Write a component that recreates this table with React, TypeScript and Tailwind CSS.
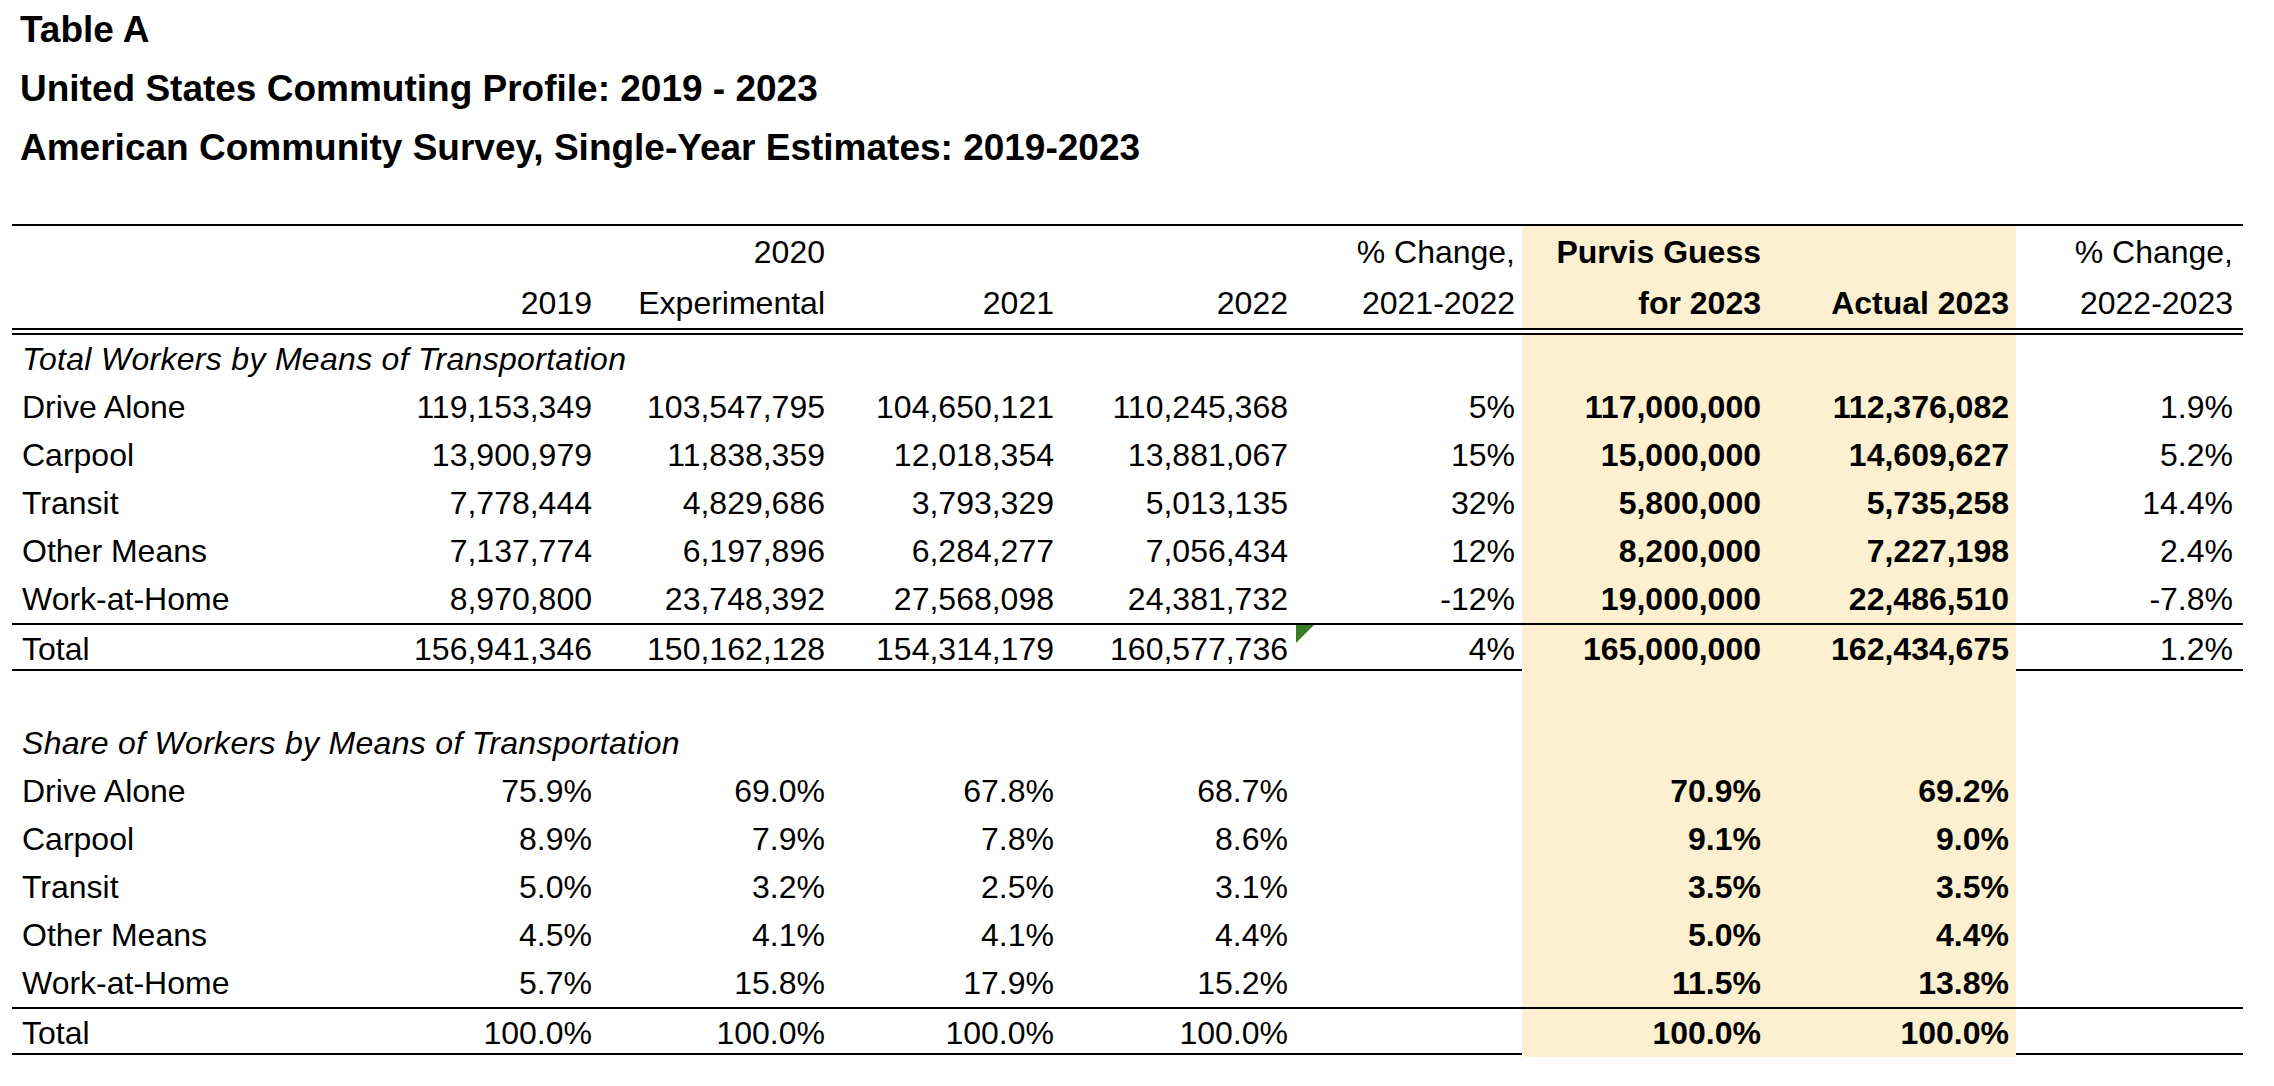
const COLS =
  "grid grid-cols-[347px_240px_233px_229px_234px_227px_246px_248px_227px]";

const totals: [string, string[]][] = [
  ["Drive Alone", ["119,153,349", "103,547,795", "104,650,121", "110,245,368", "5%", "117,000,000", "112,376,082", "1.9%"]],
  ["Carpool", ["13,900,979", "11,838,359", "12,018,354", "13,881,067", "15%", "15,000,000", "14,609,627", "5.2%"]],
  ["Transit", ["7,778,444", "4,829,686", "3,793,329", "5,013,135", "32%", "5,800,000", "5,735,258", "14.4%"]],
  ["Other Means", ["7,137,774", "6,197,896", "6,284,277", "7,056,434", "12%", "8,200,000", "7,227,198", "2.4%"]],
  ["Work-at-Home", ["8,970,800", "23,748,392", "27,568,098", "24,381,732", "-12%", "19,000,000", "22,486,510", "-7.8%"]],
];

const shares: [string, string[]][] = [
  ["Drive Alone", ["75.9%", "69.0%", "67.8%", "68.7%", "", "70.9%", "69.2%", ""]],
  ["Carpool", ["8.9%", "7.9%", "7.8%", "8.6%", "", "9.1%", "9.0%", ""]],
  ["Transit", ["5.0%", "3.2%", "2.5%", "3.1%", "", "3.5%", "3.5%", ""]],
  ["Other Means", ["4.5%", "4.1%", "4.1%", "4.4%", "", "5.0%", "4.4%", ""]],
  ["Work-at-Home", ["5.7%", "15.8%", "17.9%", "15.2%", "", "11.5%", "13.8%", ""]],
];

function Row({
  label,
  values,
  italic,
  className = "",
  flag,
}: {
  label: string;
  values: string[];
  italic?: boolean;
  className?: string;
  flag?: boolean;
}) {
  return (
    <div className={`${COLS} h-[48px] ${className}`}>
      <div
        className={`flex items-center whitespace-nowrap pl-[10px] ${
          italic ? "italic tracking-[0.3px]" : ""
        }`}
      >
        {label}
      </div>
      {values.map((v, i) => {
        const hl = i === 5 || i === 6;
        return (
          <div
            key={i}
            className={`relative flex items-center justify-end whitespace-nowrap ${
              i === 7 ? "pr-[10px]" : "pr-[7px]"
            } ${hl ? "bg-[#fcf0d0] font-bold" : ""}`}
          >
            {flag && i === 4 && (
              <svg className="absolute left-px top-0" width="18" height="18" viewBox="0 0 18 18">
                <polygon points="0,0 18,0 0,18" fill="#3b7d23" />
              </svg>
            )}
            {v}
          </div>
        );
      })}
    </div>
  );
}

export default function App() {
  const blank = ["", "", "", "", "", "", "", ""];

  return (
    <div className="min-h-screen bg-white pl-[12px] font-['Liberation_Sans',Arial,sans-serif] text-[32px] text-black">
      {/* titles */}
      <div className="text-[37px] font-bold">
        <div className="flex h-[59px] items-center pl-[8px]">Table A</div>
        <div className="flex h-[60px] items-center pl-[8px]">
          United States Commuting Profile: 2019 - 2023
        </div>
        <div className="flex h-[58px] items-center pl-[8px]">
          American Community Survey, Single-Year Estimates: 2019-2023
        </div>
      </div>

      <div className="mt-[47px] w-[2231px] border-t-2 border-black">
        <div className={`${COLS} h-[51px]`}>
          <div />
          <div />
          <div className="flex items-center justify-end pr-[7px]">2020</div>
          <div />
          <div />
          <div className="flex items-center justify-end pr-[7px]">% Change,</div>
          <div className="flex items-center justify-end bg-[#fcf0d0] pr-[7px] font-bold">
            Purvis Guess
          </div>
          <div className="bg-[#fcf0d0]" />
          <div className="flex items-center justify-end pr-[10px]">% Change,</div>
        </div>
        <div className={`${COLS} h-[58px] border-b-[7px] border-double border-black`}>
          <div />
          <div className="flex items-center justify-end pr-[7px]">2019</div>
          <div className="flex items-center justify-end pr-[7px]">Experimental</div>
          <div className="flex items-center justify-end pr-[7px]">2021</div>
          <div className="flex items-center justify-end pr-[7px]">2022</div>
          <div className="flex items-center justify-end pr-[7px]">2021-2022</div>
          <div className="flex items-center justify-end bg-[#fcf0d0] pr-[7px] font-bold">
            for 2023
          </div>
          <div className="flex items-center justify-end bg-[#fcf0d0] pr-[7px] font-bold">
            Actual 2023
          </div>
          <div className="flex items-center justify-end pr-[10px]">2022-2023</div>
        </div>

        <Row label="Total Workers by Means of Transportation" values={blank} italic />
        {totals.map(([label, values]) => (
          <Row key={label} label={label} values={values} />
        ))}
        <Row
          label="Total"
          values={["156,941,346", "150,162,128", "154,314,179", "160,577,736", "4%", "165,000,000", "162,434,675", "1.2%"]}
          className="border-y-2 border-black"
          flag
        />

        <Row label="" values={blank} />
        <Row label="Share of Workers by Means of Transportation" values={blank} italic />
        {shares.map(([label, values]) => (
          <Row key={label} label={label} values={values} />
        ))}
        <Row
          label="Total"
          values={["100.0%", "100.0%", "100.0%", "100.0%", "", "100.0%", "100.0%", ""]}
          className="border-y-2 border-black"
        />
      </div>
    </div>
  );
}
